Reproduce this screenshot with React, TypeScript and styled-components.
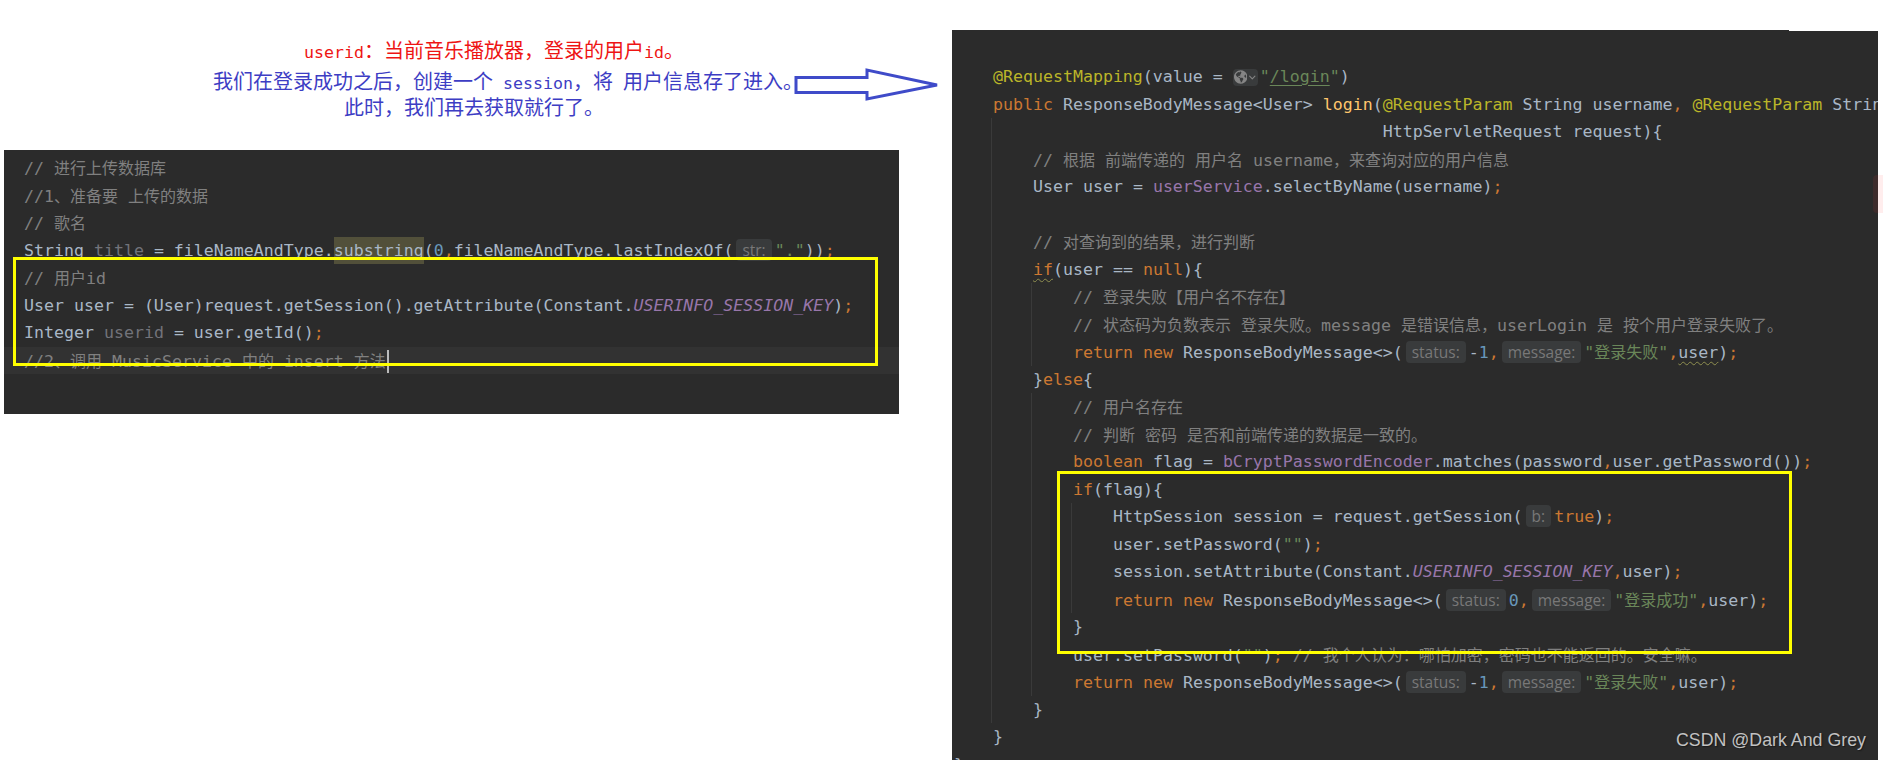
import React from 'react';
import styled, { createGlobalStyle } from 'styled-components';
import { FaGlobeAmericas } from 'react-icons/fa';
import { ChevronDown } from 'lucide-react';

const MONO = '"DejaVu Sans Mono", "Liberation Mono", monospace';
const CJK = '"Noto Sans CJK SC", sans-serif';

const GlobalStyle = createGlobalStyle`
  html, body {
    margin: 0;
    background: #ffffff;
  }
`;

// CJK runs are set slightly apart from the latin mono glyphs
const han = (text: string, size = 16) =>
  text.split(/([\u3000-\u9fff\uff00-\uffef]+)/).map((part, i) =>
    i % 2 ? <Han key={i} $size={size}>{part}</Han> : part
  );

const Cm = ({ children }: { children: string }) => <Comment>{han(children)}</Comment>;
const S = ({ children }: { children: string }) => <Str>"{han(children)}"</Str>;

const App = () => (
  <Page>
    <GlobalStyle />
    <LeftColumn>
      <Notes>
        <RedNote>{han('userid：当前音乐播放器，登录的用户id。', 20)}</RedNote>
        <BlueNote>
          <span>{han('我们在登录成功之后，创建一个 session，将 用户信息存了进入。', 20)}</span>
          <Arrow width="146" height="33" viewBox="0 0 146 33">
            <path
              d="M2 9.5H73V2L143 17L73 31V24.5H2Z"
              fill="#ffffff"
              stroke="#3f4bc9"
              strokeWidth="3"
            />
          </Arrow>
        </BlueNote>
        <BlueNoteLast>{han('此时，我们再去获取就行了。', 20)}</BlueNoteLast>
      </Notes>
      <UploadPanel>
        <UploadLine><Cm>// 进行上传数据库</Cm></UploadLine>
        <UploadLine><Cm>//1、准备要 上传的数据</Cm></UploadLine>
        <UploadLine><Cm>// 歌名</Cm></UploadLine>
        <UploadLine>
          String <Unused>title</Unused> = fileNameAndType.<Selected>substring</Selected>(<Num>0</Num><Kw>,</Kw>fileNameAndType.lastIndexOf(<Hint>str:</Hint><S>.</S>))<Kw>;</Kw>
        </UploadLine>
        <UploadLine><Cm>// 用户id</Cm></UploadLine>
        <UploadLine>
          User user = (User)request.getSession().getAttribute(Constant.<Const>USERINFO_SESSION_KEY</Const>)<Kw>;</Kw>
        </UploadLine>
        <UploadLine>
          Integer <Unused>userid</Unused> = user.getId()<Kw>;</Kw>
        </UploadLine>
        <CurrentLine><Cm>//2、调用 MusicService 中的 insert 方法</Cm><Caret /></CurrentLine>
        <LeftFrame />
      </UploadPanel>
    </LeftColumn>

    <LoginPanel>
      <TopNotch />
      <Code>
        <Line>
          <Ann>@RequestMapping</Ann>(value = <GlobePill><FaGlobeAmericas size={14} /><ChevronDown size={11} strokeWidth={2.5} /></GlobePill><Str>"<RouteLink>/login</RouteLink>"</Str>)
        </Line>
        <Line>
          <Kw>public</Kw> ResponseBodyMessage&lt;User&gt; <Method>login</Method>(<Ann>@RequestParam</Ann> String username<Kw>,</Kw> <Ann>@RequestParam</Ann> String password<Kw>,</Kw>
        </Line>
        <Level>
          <Line>{'                                   '}HttpServletRequest request){'{'}</Line>
          <Line><Cm>// 根据 前端传递的 用户名 username，来查询对应的用户信息</Cm></Line>
          <Line>User user = <Const as="span" $plain>userService</Const>.selectByName(username)<Kw>;</Kw></Line>
          <Line />
          <Line><Cm>// 对查询到的结果，进行判断</Cm></Line>
          <Line><Squiggle><Kw>if</Kw></Squiggle>(user == <Kw>null</Kw>){'{'}</Line>
          <Level>
            <Line><Cm>// 登录失败【用户名不存在】</Cm></Line>
            <Line><Cm>// 状态码为负数表示 登录失败。message 是错误信息，userLogin 是 按个用户登录失败了。</Cm></Line>
            <Line>
              <Kw>return new</Kw> ResponseBodyMessage&lt;&gt;(<Hint>status:</Hint>-<Num>1</Num><Kw>,</Kw><Hint>message:</Hint><S>登录失败</S><Kw>,</Kw><Squiggle>user</Squiggle>)<Kw>;</Kw>
            </Line>
          </Level>
          <Line>{'}'}<Kw>else</Kw>{'{'}</Line>
          <Level>
            <Line><Cm>// 用户名存在</Cm></Line>
            <Line><Cm>// 判断 密码 是否和前端传递的数据是一致的。</Cm></Line>
            <Line>
              <Kw>boolean</Kw> flag = <Const as="span" $plain>bCryptPasswordEncoder</Const>.matches(password<Kw>,</Kw>user.getPassword())<Kw>;</Kw>
            </Line>
            <Line><Kw>if</Kw>(flag){'{'}</Line>
            <Level>
              <Line>
                HttpSession session = request.getSession(<Hint>b:</Hint><Kw>true</Kw>)<Kw>;</Kw>
              </Line>
              <Line>user.setPassword(<S>{''}</S>)<Kw>;</Kw></Line>
              <Line>
                session.setAttribute(Constant.<Const>USERINFO_SESSION_KEY</Const><Kw>,</Kw>user)<Kw>;</Kw>
              </Line>
              <Line>
                <Kw>return new</Kw> ResponseBodyMessage&lt;&gt;(<Hint>status:</Hint><Num>0</Num><Kw>,</Kw><Hint>message:</Hint><S>登录成功</S><Kw>,</Kw>user)<Kw>;</Kw>
              </Line>
            </Level>
            <Line>{'}'}</Line>
            <Line>
              user.setPassword(<S>{''}</S>)<Kw>;</Kw> <Cm>// 我个人认为：哪怕加密，密码也不能返回的。安全嘛。</Cm>
            </Line>
            <Line>
              <Kw>return new</Kw> ResponseBodyMessage&lt;&gt;(<Hint>status:</Hint>-<Num>1</Num><Kw>,</Kw><Hint>message:</Hint><S>登录失败</S><Kw>,</Kw>user)<Kw>;</Kw>
            </Line>
          </Level>
          <Line>{'}'}</Line>
        </Level>
        <Line>{'}'}</Line>
      </Code>
      <ClassBrace>{'}'}</ClassBrace>
      <RightFrame />
      <Watermark>CSDN @Dark And Grey</Watermark>
    </LoginPanel>
    <ErrorMark />
  </Page>
);

export default App;

const Page = styled.div`
  position: relative;
  display: flex;
  width: 1883px;
  height: 760px;
  overflow: hidden;
  background: #ffffff;
  font-family: ${MONO}, ${CJK};
  font-size: 16.6px;
`;

const LeftColumn = styled.div`
  flex: 0 0 952px;
`;

const Notes = styled.div`
  height: 150px;
  padding-top: 37px;
  box-sizing: border-box;
  line-height: 25px;
  white-space: pre;
`;

const RedNote = styled.div`
  padding-left: 304px;
  color: #ee1414;
`;

const BlueNote = styled.div`
  display: flex;
  align-items: center;
  height: 25px;
  margin-top: 4px;
  padding-left: 213px;
  color: #3d3dc4;
`;

const BlueNoteLast = styled.div`
  padding-left: 344px;
  color: #3d3dc4;
`;

const Arrow = styled.svg`
  flex: none;
  margin: 6px 0 0 -9px;
`;

const Han = styled.span<{ $size: number }>`
  font-family: ${CJK};
  font-size: ${(p) => p.$size}px;
`;

const CodePanel = styled.div`
  position: relative;
  background: #2b2b2b;
  color: #a9b7c6;
  overflow: hidden;
  white-space: pre;
`;

const UploadPanel = styled(CodePanel)`
  width: 895px;
  height: 264px;
  margin-left: 4px;
  padding-top: 4px;
  box-sizing: border-box;
`;

const UploadLine = styled.div`
  height: 27.5px;
  padding-left: 20px;
  line-height: 27.5px;
`;

const CurrentLine = styled(UploadLine)`
  background: #323232;
`;

const Caret = styled.span`
  display: inline-block;
  width: 2px;
  height: 23px;
  margin-left: 1px;
  background: #bbbbbb;
  vertical-align: -6px;
`;

const LoginPanel = styled(CodePanel)`
  flex: 0 0 926px;
  margin-top: 30px;
  height: 730px;
`;

const TopNotch = styled.div`
  position: absolute;
  top: 0;
  right: 0;
  width: 89px;
  height: 1px;
  background: #ffffff;
`;

const Code = styled.div`
  padding: 33px 0 0 39px;
`;

const Line = styled.div`
  height: 27.5px;
  padding-left: 2px;
  line-height: 27.5px;
`;

const Level = styled.div`
  border-left: 1px solid #3a3a3a;
  padding-left: 39px;
`;

const ClassBrace = styled(Line)`
  padding-left: 2px;
`;

const Kw = styled.span`
  color: #cc7832;
`;

const Ann = styled.span`
  color: #bbb529;
`;

const Method = styled.span`
  color: #ffc66d;
`;

const Str = styled.span`
  color: #6a8759;
`;

const Comment = styled.span`
  color: #808080;
`;

const Num = styled.span`
  color: #6897bb;
`;

const Const = styled.span<{ $plain?: boolean }>`
  color: #9876aa;
  font-style: ${(p) => (p.$plain ? 'normal' : 'italic')};
`;

const Unused = styled.span`
  color: #72737a;
`;

const Selected = styled.span`
  display: inline-block;
  background: #52503a;
`;

const RouteLink = styled.span`
  text-decoration: underline;
  text-underline-offset: 3px;
`;

const Squiggle = styled.span`
  text-decoration: underline wavy #8f8f4f 1px;
  text-underline-offset: 3px;
`;

const Hint = styled.span`
  display: inline-block;
  height: 22px;
  margin: 0 3px;
  padding: 0 6px;
  border-radius: 4px;
  background: #393b3c;
  color: #787878;
  font-family: "Open Sans", sans-serif;
  font-size: 15.5px;
  line-height: 22px;
`;

const GlobePill = styled.span`
  display: inline-flex;
  align-items: center;
  width: 25px;
  height: 17px;
  margin-right: 2px;
  padding-left: 1px;
  box-sizing: border-box;
  border-radius: 4px;
  background: #393b3c;
  color: #858585;
  vertical-align: -2px;
`;

const LeftFrame = styled.div`
  position: absolute;
  left: 9px;
  top: 107px;
  width: 865px;
  height: 109px;
  box-sizing: border-box;
  border: 3px solid #ffff00;
`;

const RightFrame = styled.div`
  position: absolute;
  left: 105px;
  top: 441px;
  width: 735px;
  height: 183px;
  box-sizing: border-box;
  border: 3px solid #ffff00;
`;

const ErrorMark = styled.div`
  position: absolute;
  right: 0;
  top: 175px;
  width: 10px;
  height: 38px;
  border-radius: 4px 0 0 4px;
  background: rgba(255, 60, 60, 0.09);
`;

const Watermark = styled.div`
  position: absolute;
  right: 12px;
  top: 698px;
  color: #c2c2c2;
  font-family: "Liberation Sans", Arial, sans-serif;
  font-size: 17.8px;
  line-height: 24px;
  text-shadow: 1px 1px 1px #1a1a1a;
`;
